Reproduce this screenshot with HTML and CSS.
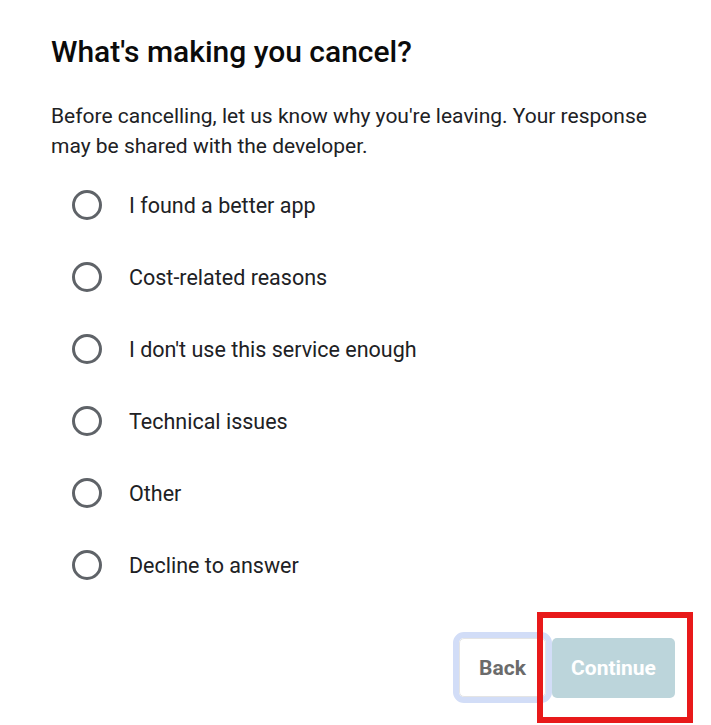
FILE: index.html
```html
<!DOCTYPE html>
<html>
<head>
<meta charset="utf-8">
<link rel="stylesheet" href="styles.css">
</head>
<body>
<div class="dialog">
  <h1 class="title">What's making you cancel?</h1>
  <p class="desc">Before cancelling, let us know why you're leaving. Your response may be shared with the developer.</p>
  <div class="options">
    <label class="option"><span class="radio"></span><span class="label">I found a better app</span></label>
    <label class="option"><span class="radio"></span><span class="label">Cost-related reasons</span></label>
    <label class="option"><span class="radio"></span><span class="label">I don't use this service enough</span></label>
    <label class="option"><span class="radio"></span><span class="label">Technical issues</span></label>
    <label class="option"><span class="radio"></span><span class="label">Other</span></label>
    <label class="option"><span class="radio"></span><span class="label">Decline to answer</span></label>
  </div>
  <div class="actions">
    <div class="focus-ring"><button class="btn back">Back</button></div>
    <div class="highlight"><button class="btn continue">Continue</button></div>
  </div>
</div>
</body>
</html>
```
FILE: styles.css
```css
html, body {
  margin: 0;
  padding: 0;
  background: #ffffff;
}
body {
  font-family: Roboto, "Noto Sans", sans-serif;
  color: #202124;
}
.dialog {
  width: 711px;
  height: 725px;
  box-sizing: border-box;
  padding: 32px 0 0 51px;
  position: relative;
  overflow: hidden;
}
.title {
  margin: 0;
  font-size: 30px;
  font-weight: 500;
  line-height: 40px;
  color: #0b0b0b;
}
.desc {
  margin: 29px 0 0 0;
  width: 620px;
  font-size: 21px;
  line-height: 30px;
  color: #202124;
}
.options {
  display: flex;
  flex-direction: column;
  margin-top: 8px;
}
.option {
  display: flex;
  align-items: center;
  height: 72px;
  padding-left: 21px;
}
.radio {
  width: 24px;
  height: 24px;
  border: 3px solid #5f6368;
  border-radius: 50%;
  flex: none;
}
.label {
  margin-left: 27px;
  font-size: 21.5px;
  color: #202124;
}
.actions {
  display: flex;
  justify-content: flex-end;
  align-items: center;
  margin-top: 11px;
  padding-right: 18px;
}
.focus-ring {
  border: 6px solid #d2ddf7;
  border-radius: 11px;
  display: flex;
}
.btn {
  font-family: Roboto, "Noto Sans", sans-serif;
  font-size: 21px;
  font-weight: 700;
  height: 59px;
  border-radius: 5px;
  cursor: pointer;
}
.back {
  width: 87px;
  background: #ffffff;
  color: #6b6b6b;
  border: 1px solid #e4e4e4;
}
.highlight {
  border: 6px solid #e8191a;
  padding: 20px 12px 19px 9px;
  margin-left: -15px;
  display: flex;
}
.continue {
  width: 123px;
  height: 60px;
  background: #bcd5db;
  color: #ffffff;
  border: none;
}
```
